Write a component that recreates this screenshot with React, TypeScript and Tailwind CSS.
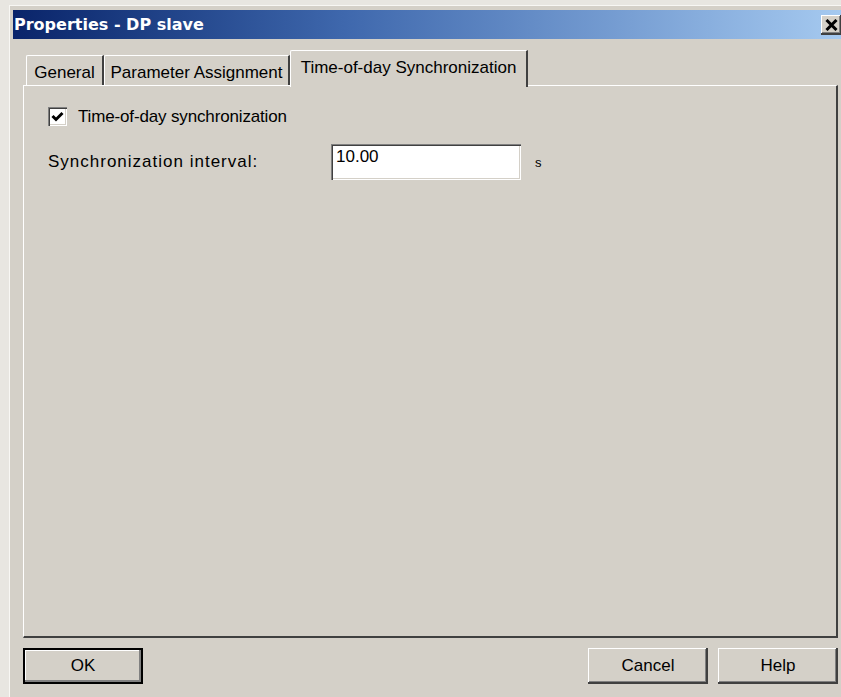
import React, { useState } from 'react';

// Classic 3D edges used by the dialog controls
const raised = 'shadow-[inset_-2px_-2px_#404040,inset_1px_1px_#ffffff,inset_-3px_-3px_#808080]';
const sunken = 'shadow-[inset_1px_1px_#808080,inset_2px_2px_#404040,inset_-1px_-1px_#ffffff,inset_-2px_-2px_#d4d0c8]';

const Tab: React.FC<{ label: string; active?: boolean; width: string; onClick: () => void }> = ({ label, active, width, onClick }) => (
    <div
        onClick={onClick}
        className={`${width} flex items-center justify-center select-none border-t border-l border-white border-r-2 border-r-[#404040] rounded-tl-[2px] ${
            active ? 'relative z-10 h-[37px] -mb-[2px] pb-[3px] bg-[#d4d0c8]' : 'h-[30px] pt-[4px]'
        }`}
    >
        <span className="whitespace-nowrap">{label}</span>
    </div>
);

const Button: React.FC<{ label: string; isDefault?: boolean }> = ({ label, isDefault }) => (
    <button
        className={`w-[120px] h-[36px] bg-[#d4d0c8] text-[17px] ${
            isDefault ? 'border-2 border-black shadow-[inset_-2px_-2px_#808080,inset_1px_1px_#ffffff]' : raised
        }`}
    >
        {label}
    </button>
);

export default function App() {
    const [tab, setTab] = useState(2);
    const [synced, setSynced] = useState(true);
    const [interval, setInterval] = useState('10.00');

    return (
        <div className="w-[841px] h-[697px] overflow-hidden bg-[#e8e6e1] font-['Liberation_Sans',Arial,sans-serif] text-[17px] text-black">
            <div className="ml-[9px] mt-[5px] w-[860px] h-[720px] bg-[#d4d0c8] border-l border-t border-[#f8f7f4] pl-[3px] pt-[4px]">
                {/* Title bar */}
                <div className="w-[831px] h-[29px] flex items-center justify-between pl-[1px] pr-[2px] bg-gradient-to-r from-[#0a246a] via-[#3f68ad] via-40% to-[#a6caf0]">
                    <span className="font-['DejaVu_Sans',sans-serif] font-bold text-[16px] text-white">
                        Properties - DP slave
                    </span>
                    <button className={`w-[21px] h-[20px] bg-[#d4d0c8] flex items-center justify-center ${raised}`}>
                        <svg width="13" height="12" viewBox="0 0 13 12">
                            <path d="M1.5 1 L11.5 11 M11.5 1 L1.5 11" stroke="#000" strokeWidth="3" />
                        </svg>
                    </button>
                </div>

                <div className="pl-[10px] pt-[11px]">
                    {/* Tabs */}
                    <div className="flex items-end h-[35px] pl-[3px]">
                        <Tab label="General" width="w-[78px]" active={tab === 0} onClick={() => setTab(0)} />
                        <Tab label="Parameter Assignment" width="w-[186px]" active={tab === 1} onClick={() => setTab(1)} />
                        <Tab label="Time-of-day Synchronization" width="w-[238px]" active={tab === 2} onClick={() => setTab(2)} />
                    </div>

                    {/* Tab page */}
                    <div className="w-[815px] h-[553px] border-t border-l border-white border-r-2 border-b-2 border-r-[#404040] border-b-[#404040] pl-[24px] pt-[21px]">
                        <label className="flex items-center gap-[11px] h-[19px] select-none">
                            <span
                                onClick={() => setSynced(!synced)}
                                className={`w-[19px] h-[19px] bg-white flex items-center justify-center ${sunken}`}
                            >
                                {synced && (
                                    <svg width="13" height="11" viewBox="0 0 13 11">
                                        <path d="M1.5 5 L5 8.5 L11.5 2" stroke="#000" strokeWidth="3" fill="none" />
                                    </svg>
                                )}
                            </span>
                            <span className="tracking-[-0.15px]">Time-of-day synchronization</span>
                        </label>

                        <div className="flex items-center mt-[18px]">
                            <span className="w-[283px] tracking-[1px]">Synchronization interval:</span>
                            <input
                                value={interval}
                                onChange={(e) => setInterval(e.target.value)}
                                className={`w-[190px] h-[36px] bg-white outline-none pl-[5px] pb-[11px] text-[17px] ${sunken}`}
                            />
                            <span className="ml-[14px] text-[13px] pt-[2px]">s</span>
                        </div>
                    </div>

                    {/* Buttons */}
                    <div className="w-[815px] flex justify-between mt-[10px]">
                        <Button label="OK" isDefault />
                        <div className="flex gap-[10px]">
                            <Button label="Cancel" />
                            <Button label="Help" />
                        </div>
                    </div>
                </div>
            </div>
        </div>
    );
}
